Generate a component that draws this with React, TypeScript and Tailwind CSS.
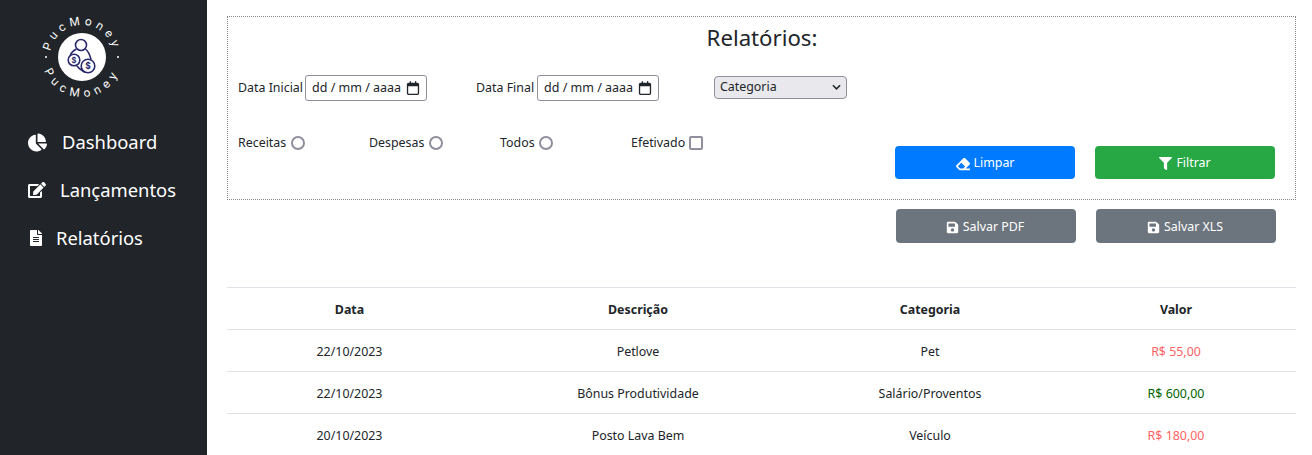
import { FaChartPie, FaEdit, FaEraser, FaFileAlt, FaFilter, FaSave } from "react-icons/fa";
import { FaRegCalendar } from "react-icons/fa6";

const rows = [
  { data: "22/10/2023", descricao: "Petlove", categoria: "Pet", valor: "R$ 55,00", receita: false },
  { data: "22/10/2023", descricao: "Bônus Produtividade", categoria: "Salário/Proventos", valor: "R$ 600,00", receita: true },
  { data: "20/10/2023", descricao: "Posto Lava Bem", categoria: "Veículo", valor: "R$ 180,00", receita: false },
];

function Logo() {
  return (
    <svg width="90" height="90" viewBox="0 0 90 90" className="block overflow-visible">
      <defs>
        <path id="arcTop" d="M 13 45 A 32 32 0 0 1 77 45" fill="none" />
        <path id="arcBottom" d="M 5 45 A 40 40 0 0 0 85 45" fill="none" />
      </defs>
      <text fill="#fff" fontSize="11.5" letterSpacing="3.9" fontFamily="Inter, sans-serif">
        <textPath href="#arcTop" startOffset="50%" textAnchor="middle">PucMoney</textPath>
      </text>
      <text fill="#fff" fontSize="11.5" letterSpacing="5" fontFamily="Inter, sans-serif">
        <textPath href="#arcBottom" startOffset="50%" textAnchor="middle">PucMoney</textPath>
      </text>
      <circle cx="9" cy="45" r="1" fill="#fff" />
      <circle cx="81" cy="45" r="1" fill="#fff" />
      <circle cx="45" cy="45" r="24" fill="#fff" />
      <g fill="none" stroke="#2b2a6b" strokeWidth="1.6">
        <circle cx="44" cy="33" r="5.5" />
        <path d="M39.5 37 C36.5 38.5 34.5 40 33.5 43 M48.5 37 C51 39 52.5 41 54 47.5 M40 54 C42 57 45 58 48 60.5" />
        <circle cx="37" cy="48" r="5.8" />
        <circle cx="51" cy="54" r="6.8" />
      </g>
      <text x="37" y="50.6" fontSize="7.5" fontWeight="700" textAnchor="middle" fill="#2b2a6b" fontFamily="Inter, sans-serif">$</text>
      <text x="51" y="57" fontSize="8.5" fontWeight="700" textAnchor="middle" fill="#2b2a6b" fontFamily="Inter, sans-serif">$</text>
    </svg>
  );
}

function DateField({ label, className }: { label: string; className?: string }) {
  return (
    <div className={`flex items-center ${className ?? ""}`}>
      <span>{label}</span>
      <div className="ml-auto flex h-[26px] w-[122px] items-center justify-between whitespace-nowrap rounded-[3px] border border-[#8f8f9d] px-[6px] text-[12.5px]">
        <span>dd / mm / aaaa</span>
        <FaRegCalendar className="text-[14px]" />
      </div>
    </div>
  );
}

function Radio({ label }: { label: string }) {
  return (
    <label className="flex w-[131px] items-center gap-[4.5px]">
      {label}
      <span className="h-[14px] w-[14px] rounded-full border-2 border-[#8f8f9d]" />
    </label>
  );
}

export default function App() {
  return (
    <div className="flex h-[455px] overflow-hidden bg-white font-['Noto_Sans',sans-serif] text-[12.4px] text-[#212529]">
      <aside className="w-[207px] shrink-0 bg-[#212529] text-white">
        <div className="pl-[37px] pt-[12px]">
          <Logo />
        </div>
        <nav className="mt-[16px] flex flex-col text-[18.4px]">
          <a className="flex h-[48px] items-center pl-[28px]">
            <FaChartPie className="text-[19px]" />
            <span className="ml-[15px]">Dashboard</span>
          </a>
          <a className="flex h-[48px] items-center pl-[28px]">
            <FaEdit className="text-[18px]" />
            <span className="ml-[14px]">Lançamentos</span>
          </a>
          <a className="flex h-[48px] items-center pl-[28px]">
            <FaFileAlt className="text-[16px]" />
            <span className="ml-[12px]">Relatórios</span>
          </a>
        </nav>
      </aside>

      <main className="min-w-0 flex-1 pl-[20px] pr-[16px] pt-[16px]">
        <section className="h-[184px] border border-dotted border-[#888] px-[10px]">
          <h1 className="pl-[1px] pt-[4px] text-center text-[22.2px] leading-[34px]">Relatórios:</h1>
          <div className="mt-[20px] flex items-center">
            <div className="w-[238px]">
              <DateField label="Data Inicial" className="w-[189px]" />
            </div>
            <div className="w-[238px]">
              <DateField label="Data Final" className="w-[183px]" />
            </div>
            <div className="relative mb-[2px] h-[23px] w-[133px]">
              <select className="h-full w-full appearance-none rounded-[4px] border border-[#8f8f9d] bg-[#e9e9ed] pl-[5px] pt-[1px]">
                <option>Categoria</option>
              </select>
              <svg viewBox="0 0 10 6" className="pointer-events-none absolute right-[6px] top-[8px] h-[6px] w-[9px]" fill="none" stroke="#212529" strokeWidth="1.7">
                <path d="M1 1l4 4 4-4" />
              </svg>
            </div>
          </div>
          <div className="mt-[33px] flex items-start justify-between pr-[10px]">
            <div className="flex">
              <Radio label="Receitas" />
              <Radio label="Despesas" />
              <Radio label="Todos" />
              <label className="flex items-center gap-[4px]">
                Efetivado
                <span className="h-[14px] w-[14px] rounded-[2px] border-2 border-[#8f8f9d]" />
              </label>
            </div>
            <div className="mt-[12px] flex gap-[20px]">
              <button className="flex h-[33px] w-[180px] items-center justify-center gap-[4px] rounded-[4px] bg-[#007bff] pt-[2px] text-white">
                <FaEraser className="text-[14px]" /> Limpar
              </button>
              <button className="flex h-[33px] w-[180px] items-center justify-center gap-[4px] rounded-[4px] bg-[#28a745] pt-[2px] text-white">
                <FaFilter className="text-[13px]" /> Filtrar
              </button>
            </div>
          </div>
        </section>

        <div className="mr-[20px] mt-[9px] flex justify-end gap-[20px]">
          <button className="flex h-[34px] w-[180px] items-center justify-center gap-[4px] rounded-[4px] bg-[#6c757d] pr-[2px] pt-[2px] text-white">
            <FaSave className="text-[13px]" /> Salvar PDF
          </button>
          <button className="flex h-[34px] w-[180px] items-center justify-center gap-[4px] rounded-[4px] bg-[#6c757d] pr-[2px] pt-[2px] text-white">
            <FaSave className="text-[13px]" /> Salvar XLS
          </button>
        </div>

        <table className="mt-[44px] w-full table-fixed border-t border-[#dee2e6] text-center">
          <thead>
            <tr className="h-[42px] border-b border-[#dee2e6]">
              <th className="w-[245px] pt-[3px] font-bold">Data</th>
              <th className="w-[332px] pt-[3px] font-bold">Descrição</th>
              <th className="w-[252px] pt-[3px] font-bold">Categoria</th>
              <th className="pt-[3px] font-bold">Valor</th>
            </tr>
          </thead>
          <tbody>
            {rows.map((row) => (
              <tr key={row.descricao} className="h-[42px] border-b border-[#dee2e6]">
                <td className="pt-[3px]">{row.data}</td>
                <td className="pt-[3px]">{row.descricao}</td>
                <td className="pt-[3px]">{row.categoria}</td>
                <td className={`pt-[3px] ${row.receita ? "text-[#006400]" : "text-[#ff6464]"}`}>{row.valor}</td>
              </tr>
            ))}
          </tbody>
        </table>
      </main>
    </div>
  );
}
